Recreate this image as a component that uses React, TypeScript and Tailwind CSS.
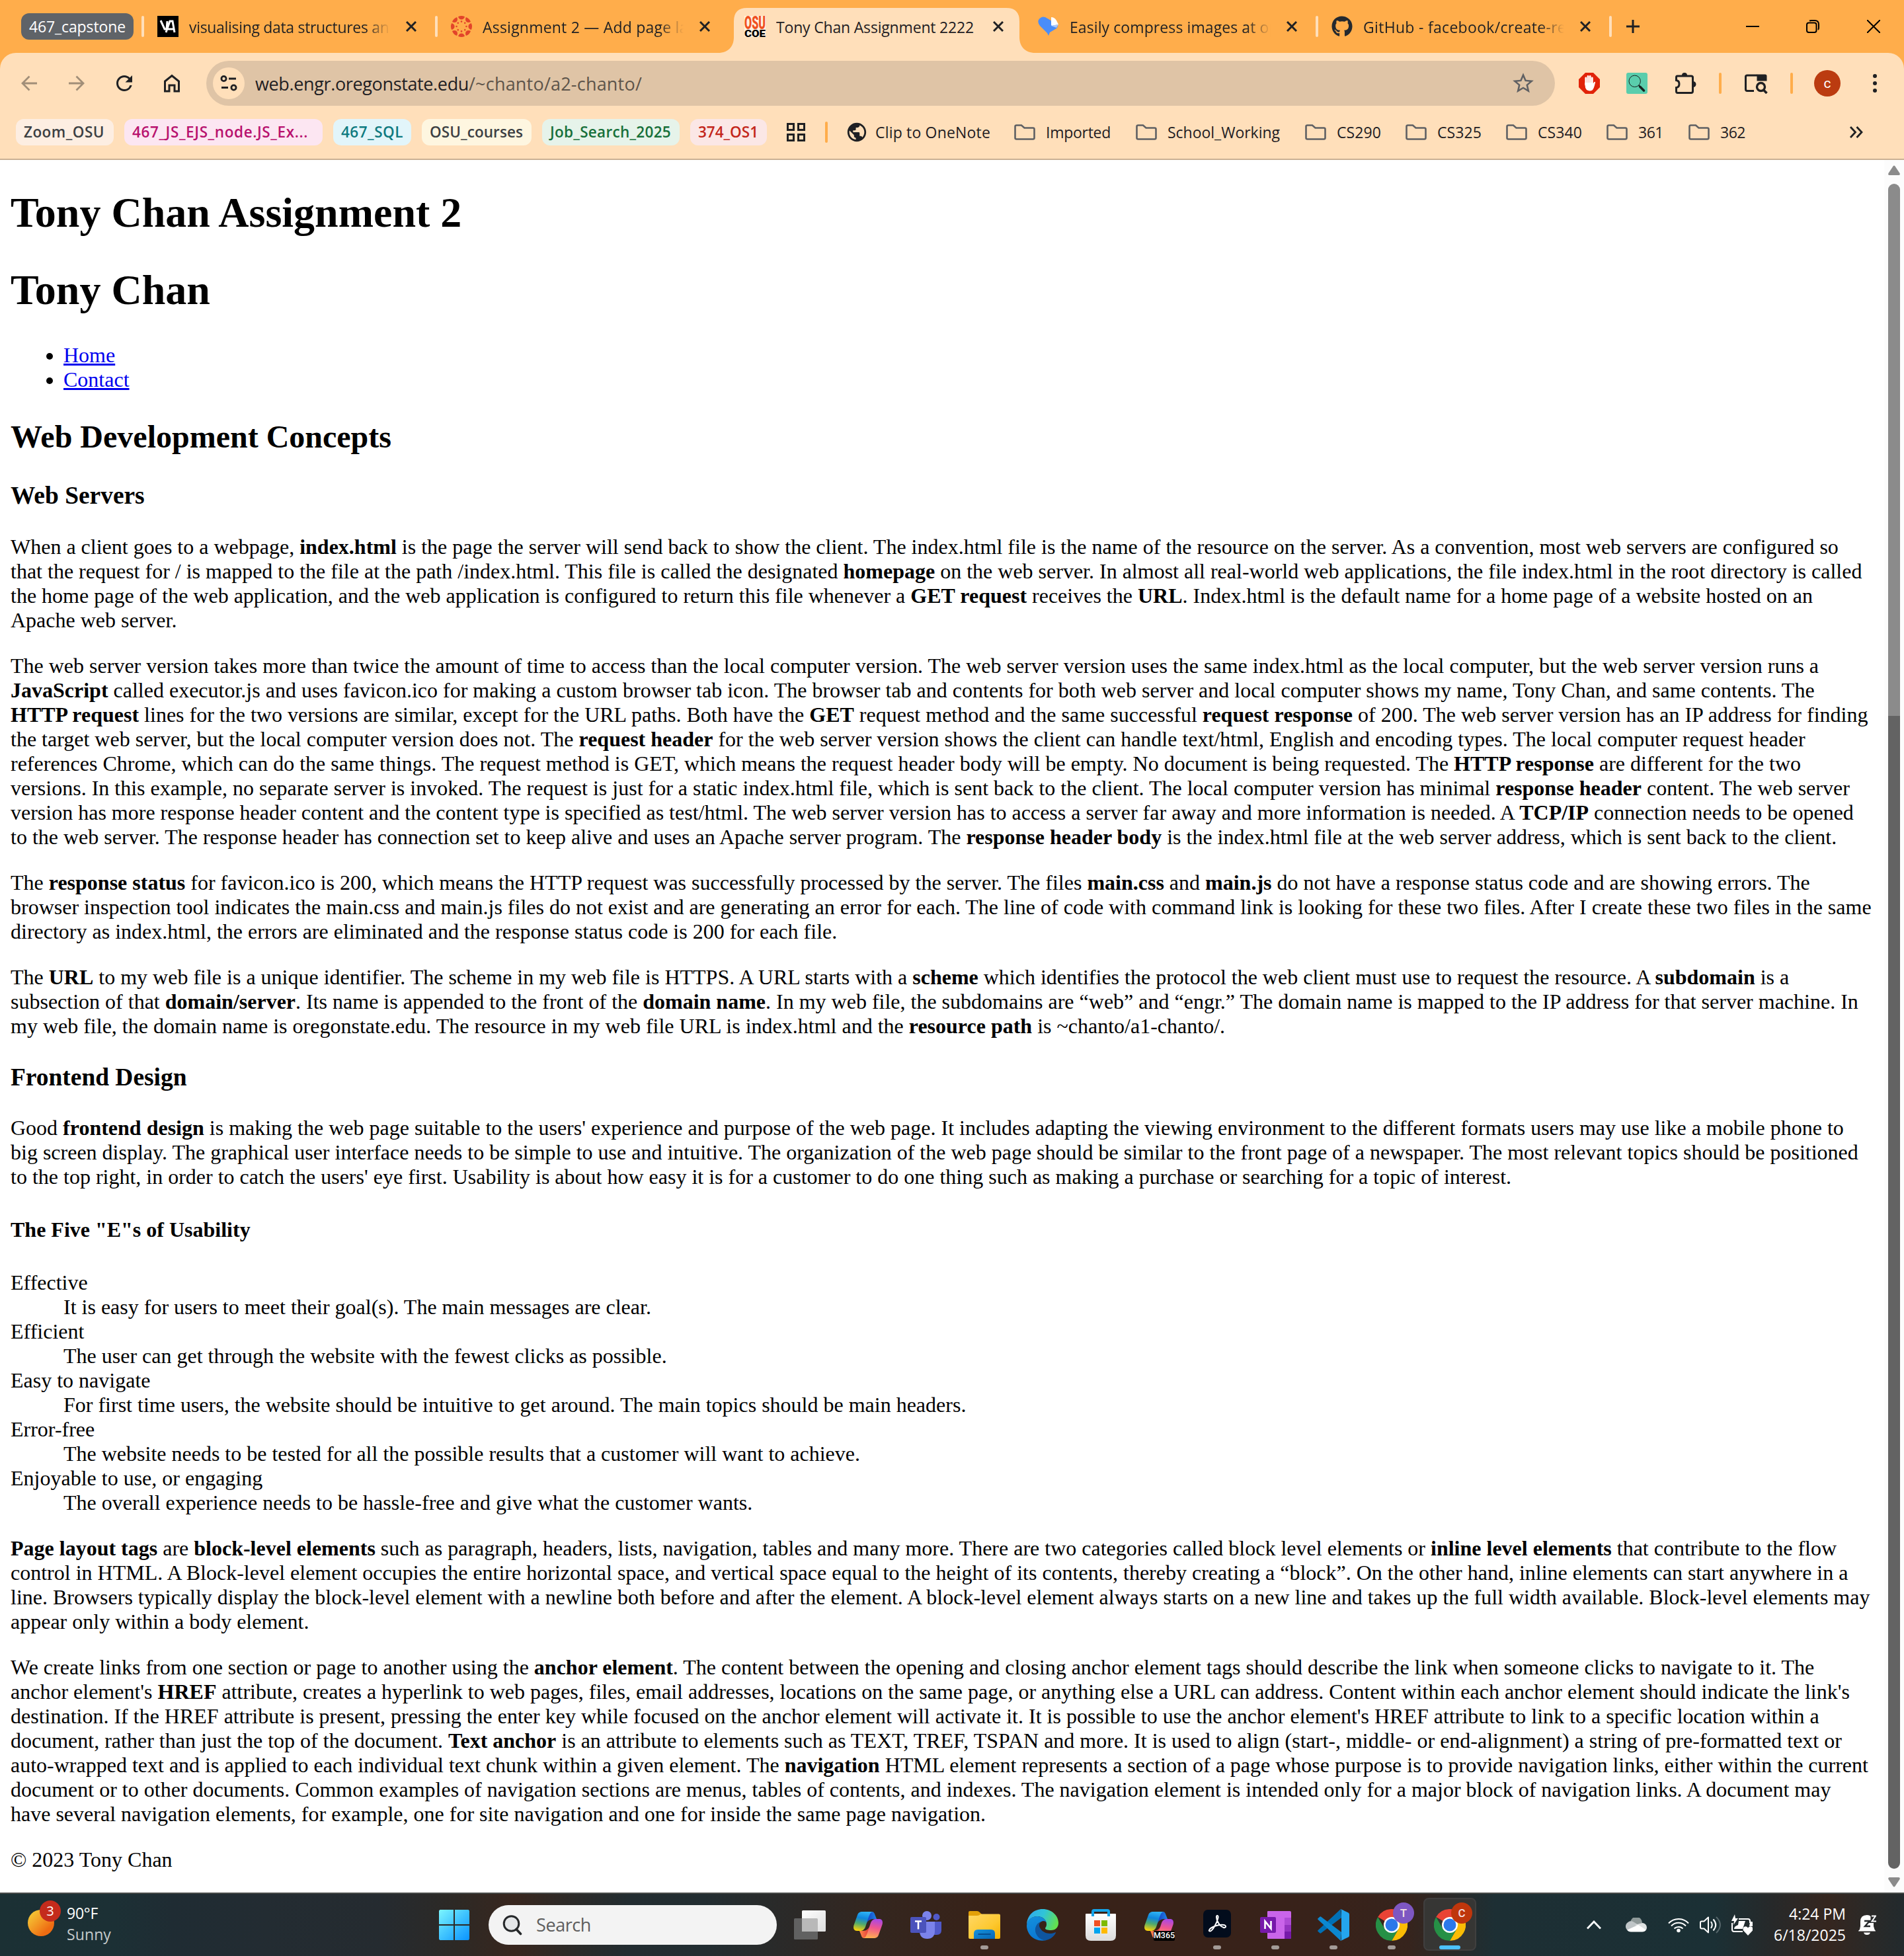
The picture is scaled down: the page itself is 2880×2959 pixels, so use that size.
import React, { useLayoutEffect, useRef } from "react";
import { MdRefresh, MdStarBorder, MdPublic } from "react-icons/md";
import { FaGithub } from "react-icons/fa";

/* Text whose tracking is adjusted so that it occupies exactly `w` pixels. */
function Fit({ w, className = "", children }: { w: number; className?: string; children: React.ReactNode }) {
  const ref = useRef<HTMLSpanElement>(null);
  useLayoutEffect(() => {
    const el = ref.current;
    if (!el) return;
    el.style.letterSpacing = "0px";
    const n = (el.textContent || "").length;
    const natural = el.getBoundingClientRect().width;
    el.style.letterSpacing = `${(w - natural) / n}px`;
  }, [w]);
  return (
    <span ref={ref} className={`inline-block whitespace-pre ${className}`}>
      {children}
    </span>
  );
}

const ink = "#1f2023";

function CloseX({ size = 16, sw = 3 }: { size?: number; sw?: number }) {
  return (
    <svg width={size} height={size} viewBox="0 0 16 16" fill="none" stroke={ink} strokeWidth={sw}>
      <path d="M1 1 15 15M15 1 1 15" />
    </svg>
  );
}

function VaIcon() {
  return (
    <svg width="32" height="32" viewBox="0 0 32 32">
      <rect width="32" height="32" fill="#000" />
      <path d="M5 7 11 20H14L15 8M13 25 19 8H23L26 25M16 20H26" fill="none" stroke="#fff" strokeWidth="3" />
    </svg>
  );
}

function CanvasIcon() {
  const a = [0, 45, 90, 135, 180, 225, 270, 315];
  return (
    <svg width="32" height="32" viewBox="0 0 32 32" fill="#e2432a">
      {a.map((d) => (
        <g key={d} transform={`rotate(${d} 16 16)`}>
          <path d="M11 1.2Q16-1.2 21 1.2Q19.5 5.6 16 5.6Q12.500 5.600 11 1.200Z" />
          <circle cx="16" cy="8.600" r="1.300" />
        </g>
      ))}
    </svg>
  );
}

function OsuIcon() {
  return (
    <svg width="32" height="32" viewBox="0 0 32 32" fontFamily="Roboto, sans-serif" fontWeight="900">
      <rect width="32" height="32" fill="#fff" fillOpacity=".55" />
      <g transform="scale(1 1.45)">
        <text x="0" y="13.600" fontSize="18.500" textLength="32" lengthAdjust="spacingAndGlyphs" fill="#f0501e">OSU</text>
      </g>
      <text x="0" y="31.600" fontSize="15.500" textLength="32" lengthAdjust="spacingAndGlyphs" fill="#000">COE</text>
    </svg>
  );
}

function HeartIcon() {
  return (
    <svg width="32" height="32" viewBox="0 0 32 32">
      <path d="M16 30 14 26 3 15Q-1 10 1 6Q5 0 11 2L18 6 30 15Q30 17 28 19L18 25Z" fill="#4a8df8" />
      <path d="M20 14V2Q25 2 28 7L31 13 21 15Z" fill="#fff" />
      <path d="M20 15 31 13 28 18Z" fill="#a9c8fb" />
    </svg>
  );
}

function Tab({ icon, title, w, active, sep }: { icon: React.ReactNode; title: string; w: number; active?: boolean; sep?: boolean }) {
  return (
    <div className="relative flex h-20 w-[444px] shrink-0 items-center">
      {active && (
        <svg className="absolute top-0 left-[-16px]" width="480" height="80" viewBox="0 0 480 80">
          <path d="M0 80C16 80 24 70 24 56V32Q24 12 44 12H436Q456 12 456 32V56C456 70 464 80 480 80Z" fill="#ffdfba" />
        </svg>
      )}
      <div className={`h-8 w-1 rounded-full ${sep ? "bg-[#ffdfba]" : ""}`} />
      <div className="relative ml-5 h-8 w-8">{icon}</div>
      <div
        className={`relative ml-4 w-[304px] overflow-hidden pt-[2px] text-[23px] leading-8 text-[#1f2023] ${
          active ? "" : "[mask-image:linear-gradient(to_right,black_88%,transparent)]"
        }`}
      >
        <Fit w={w}>{title}</Fit>
      </div>
      <div className="relative ml-6 flex">
        <CloseX />
      </div>
    </div>
  );
}

function TabStrip() {
  return (
    <div className="flex h-20 items-center">
      <div className="ml-8 flex h-10 w-[170px] items-center justify-center rounded-xl bg-[#5f6368] text-[23px] text-white">
        <Fit w={146}>467_capstone</Fit>
      </div>
      <div className="ml-3 flex">
        <Tab sep icon={<VaIcon />} title="visualising data structures and alg" w={352} />
        <Tab sep icon={<CanvasIcon />} title="Assignment 2 — Add page layout" w={359} />
        <Tab active icon={<OsuIcon />} title="Tony Chan Assignment 2222" w={299} />
        <Tab icon={<HeartIcon />} title="Easily compress images at optimal" w={370} />
        <Tab sep icon={<FaGithub size={32} color="#24292f" />} title="GitHub - facebook/create-react" w={340} />
      </div>
      <div className="h-8 w-1 rounded-full bg-[#ffdfba]" />
      <svg className="ml-[22px]" width="20" height="20" viewBox="0 0 20 20" stroke={ink} strokeWidth="3">
        <path d="M10 0V20M0 10H20" />
      </svg>
      <svg className="ml-[161px]" width="20" height="20" viewBox="0 0 20 20" stroke="#000" strokeWidth="2">
        <path d="M0 10H20" />
      </svg>
      <svg className="ml-[71px]" width="20" height="20" viewBox="0 0 20 20" fill="none" stroke="#000" strokeWidth="2">
        <rect x="1" y="4.500" width="14.500" height="14.500" rx="3" />
        <path d="M5 1.500Q6 1 8 1H13Q19 1 19 7V12Q19 14 18 15" />
      </svg>
      <svg className="ml-[72px]" width="20" height="20" viewBox="0 0 20 20" stroke="#000" strokeWidth="2">
        <path d="M0 0 20 20M20 0 0 20" />
      </svg>
    </div>
  );
}

function Arrow({ flip }: { flip?: boolean }) {
  return (
    <svg className={flip ? "ml-12 rotate-180" : "ml-8"} width="24" height="24" viewBox="0 0 24 24" fill="none" stroke="#a18e78" strokeWidth="2.800">
      <path d="M12.500 1.500 2 12 12.500 22.500M2 12H24" />
    </svg>
  );
}

function Toolbar() {
  return (
    <div className="flex h-[92px] items-center">
      <Arrow />
      <Arrow flip />
      <MdRefresh className="ml-[42px]" size={36} color={ink} />
      <svg className="ml-[41px]" width="26" height="28" viewBox="0 0 26 28" fill="none" stroke={ink} strokeWidth="3">
        <path d="M2.500 11 13 2.500 23.500 11V26H17V17H9V26H2.500Z" />
      </svg>
      <div className="ml-[39px] flex h-[68px] w-[2040px] items-center rounded-full bg-[#dfc4a6]">
        <div className="ml-[10px] flex h-12 w-12 items-center justify-center rounded-full bg-[#ffdfba]">
          <svg width="26" height="24" viewBox="0 0 26 24" fill="none" stroke={ink} strokeWidth="2.800">
            <circle cx="5.500" cy="5" r="3.600" />
            <path d="M13 5H24M2 18.500H12" />
            <circle cx="20.500" cy="18.500" r="3.600" />
          </svg>
        </div>
        <div className="ml-4 pt-px text-[27px] leading-9 text-[#1f2023]">
          <Fit w={323}>web.engr.oregonstate.edu</Fit>
          <Fit w={262} className="text-[#5d544a]">/~chanto/a2-chanto/</Fit>
        </div>
        <MdStarBorder className="ml-auto mr-[29px]" size={38} color="#5f6063" />
      </div>
      <svg className="ml-9" width="32" height="32" viewBox="0 0 32 32">
        <path d="M10 0H22L32 10V22L22 32H10L0 22V10Z" fill="#e1230a" />
        <g stroke="#fff" strokeWidth="2.800" strokeLinecap="round">
          <path d="M10.800 18V8M14 16V5.500M17.200 16V5.500M20.300 17V8" />
        </g>
        <path d="M9.400 15H21.700V17Q23 13 24.800 13.800Q25.500 14.200 24.600 16.500Q23 24 20.500 26.500Q16 28.500 12 26Q9.400 23 9.400 18Z" fill="#fff" />
      </svg>
      <svg className="ml-10" width="32" height="32" viewBox="0 0 32 32" fill="none" stroke="#16201d">
        <rect width="32" height="32" rx="3" fill="#5acdac" stroke="none" />
        <circle cx="12.700" cy="12.800" r="8.700" strokeWidth="1" />
        <path d="M18.800 19 21 21.500" strokeWidth="2" />
        <path d="M21 21.500 26.500 27" strokeWidth="3.600" strokeLinecap="round" />
      </svg>
      <svg className="ml-[41px]" width="34" height="36" viewBox="0 0 34 36">
        <path d="M4 7H25Q27.500 7 27.500 9V30Q27.500 32.500 25 32.500H4.500Q2.500 32.500 2.500 30V24.500Q7 24 7 19Q7 14 2.500 13.500V9Q2.500 7 4 7Z" fill="none" stroke={ink} strokeWidth="3" />
        <path d="M11 6a4 4 0 0 1 8 0zM28 15a4.500 4.500 0 0 1 0 9z" fill={ink} />
      </svg>
      <div className="ml-[33px] h-8 w-1 rounded-full bg-[#ffad4b]" />
      <svg className="ml-[34px]" width="36" height="32" viewBox="0 0 36 32" fill="none" stroke={ink} strokeWidth="3">
        <path d="M15 27.500H5Q2.500 27.500 2.500 25V6Q2.500 4 5 4H20" />
        <path d="M19.500 2.500H32Q34.500 2.500 34.500 5V12.500H19.500Z" fill={ink} stroke="none" />
        <circle cx="25.500" cy="21.500" r="6" strokeWidth="3.400" />
        <path d="M29.500 26 34.500 31" strokeWidth="3.600" />
      </svg>
      <div className="ml-[34px] h-8 w-1 rounded-full bg-[#ffad4b]" />
      <div className="ml-8 flex h-10 w-10 items-center justify-center rounded-full bg-[#bb3b10] font-['Roboto'] text-[21px] leading-none text-white">
        c
      </div>
      <svg className="ml-[49px]" width="6" height="28" viewBox="0 0 6 28" fill={ink}>
        <circle cx="3" cy="3" r="3" />
        <circle cx="3" cy="14" r="3" />
        <circle cx="3" cy="25" r="3" />
      </svg>
    </div>
  );
}

function Chip({ w, t, className, children }: { w: string; t: number; className: string; children: string }) {
  return (
    <div className={`mr-4 flex h-10 shrink-0 items-center rounded-xl pl-3 text-[22.500px] font-semibold ${w} ${className}`}>
      <Fit w={t}>{children}</Fit>
    </div>
  );
}

function Folder({ w, t, children }: { w: string; t: number; children: string }) {
  return (
    <div className={`flex shrink-0 items-center ${w}`}>
      <svg width="32" height="24" viewBox="0 0 32 24" fill="none" stroke="#5f6063" strokeWidth="2.600">
        <path d="M3.500 1.500H11L15.500 5.500H28.500Q30.500 5.500 30.500 7.500V20.500Q30.500 22.500 28.500 22.500H3.500Q1.500 22.500 1.500 20.500V3.500Q1.500 1.500 3.500 1.500Z" />
      </svg>
      <span className="ml-4">
        <Fit w={t}>{children}</Fit>
      </span>
    </div>
  );
}

function Bookmarks() {
  return (
    <div className="flex h-[56px] items-center pl-6 text-[23px] leading-8 text-[#1f2023]">
      <Chip w="w-[148px]" t={122} className="bg-[#fdeee2] text-[#3c4043]">Zoom_OSU</Chip>
      <Chip w="w-[300px]" t={266} className="bg-[#fce6f2] text-[#b8116e]">467_JS_EJS_node.JS_Ex...</Chip>
      <Chip w="w-[118px]" t={94} className="bg-[#e2f5fa] text-[#0e7a80]">467_SQL</Chip>
      <Chip w="w-[166px]" t={141} className="bg-[#fef6e0] text-[#3c4043]">OSU_courses</Chip>
      <Chip w="w-[208px]" t={183} className="bg-[#e6f3ea] text-[#17703a]">Job_Search_2025</Chip>
      <Chip w="w-[116px]" t={91} className="bg-[#fbe7e6] text-[#c3261b]">374_OS1</Chip>
      <svg className="ml-[14px] shrink-0" width="28" height="28" viewBox="0 0 28 28" fill="none" stroke={ink} strokeWidth="3">
        <path d="M1.500 1.500H10.500V10.500H1.500ZM17.500 1.500H26.500V10.500H17.500ZM1.500 17.500H10.500V26.500H1.500ZM17.500 17.500H26.500V26.500H17.500Z" />
      </svg>
      <div className="ml-[30px] h-8 w-1 shrink-0 rounded-full bg-[#ffad4b]" />
      <div className="ml-[27px] flex w-[255px] shrink-0 items-center">
        <MdPublic className="shrink-0" size={34} color={ink} />
        <span className="ml-[11px]">
          <Fit w={174}>Clip to OneNote</Fit>
        </span>
      </div>
      <Folder w="w-[184px]" t={98}>Imported</Folder>
      <Folder w="w-[256px]" t={170}>School_Working</Folder>
      <Folder w="w-[152px]" t={67}>CS290</Folder>
      <Folder w="w-[152px]" t={67}>CS325</Folder>
      <Folder w="w-[152px]" t={67}>CS340</Folder>
      <Folder w="w-[124px]" t={38}>361</Folder>
      <Folder w="w-[124px]" t={38}>362</Folder>
      <svg className="ml-[120px] shrink-0" width="20" height="18" viewBox="0 0 20 18" fill="none" stroke={ink} strokeWidth="2.800">
        <path d="M1 1 8.500 9 1 17M10.500 1 18 9 10.500 17" />
      </svg>
    </div>
  );
}

const H1 = "my-[0.67em] text-[64px] font-bold";
const H3 = "my-[1em] text-[37.440px] font-bold";
const P = "my-8";

const usability: [string, string][] = [
  ["Effective", "It is easy for users to meet their goal(s). The main messages are clear."],
  ["Efficient", "The user can get through the website with the fewest clicks as possible."],
  ["Easy to navigate", "For first time users, the website should be intuitive to get around. The main topics should be main headers."],
  ["Error-free", "The website needs to be tested for all the possible results that a customer will want to achieve."],
  ["Enjoyable to use, or engaging", "The overall experience needs to be hassle-free and give what the customer wants."],
];

function Article() {
  return (
    <main className="h-full w-[2850px] overflow-hidden bg-white px-4 font-['Liberation_Serif',serif] text-[32px] leading-[normal] text-black [&_b]:font-bold">
      <h1 className={H1}>Tony Chan Assignment 2</h1>
      <h1 className={H1}>Tony Chan</h1>
      <ul className="my-8 list-disc pl-20 text-black">
        <li><a href="#" className="text-[#0000ee] underline">Home</a></li>
        <li><a href="#" className="text-[#0000ee] underline">Contact</a></li>
      </ul>
      <h2 className="mt-[40.700px] mb-[0.83em] text-[48px] font-bold">Web Development Concepts</h2>
      <h3 className={H3}>Web Servers</h3>
      <p className={P}>
        When a client goes to a webpage, <b>index.html</b> is the page the server will send back to show the client. The index.html file is the name of the resource on the server. As a convention, most web servers are configured so that the request for / is mapped to the file at the path /index.html. This file is called the designated <b>homepage</b> on the web server. In almost all real-world web applications, the file index.html in the root directory is called the home page of the web application, and the web application is configured to return this file whenever a <b>GET request</b> receives the <b>URL</b>. Index.html is the default name for a home page of a website hosted on an Apache web server.
      </p>
      <p className={P}>
        The web server version takes more than twice the amount of time to access than the local computer version. The web server version uses the same index.html as the local computer, but the web server version runs a <b>JavaScript</b> called executor.js and uses favicon.ico for making a custom browser tab icon. The browser tab and contents for both web server and local computer shows my name, Tony Chan, and same contents. The <b>HTTP request</b> lines for the two versions are similar, except for the URL paths. Both have the <b>GET</b> request method and the same successful <b>request response</b> of 200. The web server version has an IP address for finding the target web server, but the local computer version does not. The <b>request header</b> for the web server version shows the client can handle text/html, English and encoding types. The local computer request header references Chrome, which can do the same things. The request method is GET, which means the request header body will be empty. No document is being requested. The <b>HTTP response</b> are different for the two versions. In this example, no separate server is invoked. The request is just for a static index.html file, which is sent back to the client. The local computer version has minimal <b>response header</b> content. The web server version has more response header content and the content type is specified as test/html. The web server version has to access a server far away and more information is needed. A <b>TCP/IP</b> connection needs to be opened to the web server. The response header has connection set to keep alive and uses an Apache server program. The <b>response header body</b> is the index.html file at the web server address, which is sent back to the client.
      </p>
      <p className={P}>
        The <b>response status</b> for favicon.ico is 200, which means the HTTP request was successfully processed by the server. The files <b>main.css</b> and <b>main.js</b> do not have a response status code and are showing errors. The browser inspection tool indicates the main.css and main.js files do not exist and are generating an error for each. The line of code with command link is looking for these two files. After I create these two files in the same directory as index.html, the errors are eliminated and the response status code is 200 for each file.
      </p>
      <p className={P}>
        The <b>URL</b> to my web file is a unique identifier. The scheme in my web file is HTTPS. A URL starts with a <b>scheme</b> which identifies the protocol the web client must use to request the resource. A <b>subdomain</b> is a subsection of that <b>domain/server</b>. Its name is appended to the front of the <b>domain name</b>. In my web file, the subdomains are “web” and “engr.” The domain name is mapped to the IP address for that server machine. In my web file, the domain name is oregonstate.edu. The resource in my web file URL is index.html and the <b>resource path</b> is ~chanto/a1-chanto/.
      </p>
      <h3 className={H3}>Frontend Design</h3>
      <p className={P}>
        Good <b>frontend design</b> is making the web page suitable to the users' experience and purpose of the web page. It includes adapting the viewing environment to the different formats users may use like a mobile phone to big screen display. The graphical user interface needs to be simple to use and intuitive. The organization of the web page should be similar to the front page of a newspaper. The most relevant topics should be positioned to the top right, in order to catch the users' eye first. Usability is about how easy it is for a customer to do one thing such as making a purchase or searching for a topic of interest.
      </p>
      <h4 className="my-[1.33em] font-bold">The Five "E"s of Usability</h4>
      <dl className="my-8">
        {usability.map(([term, text]) => (
          <React.Fragment key={term}>
            <dt>{term}</dt>
            <dd className="ml-20">{text}</dd>
          </React.Fragment>
        ))}
      </dl>
      <p className={P}>
        <b>Page layout tags</b> are <b>block-level elements</b> such as paragraph, headers, lists, navigation, tables and many more. There are two categories called block level elements or <b>inline level elements</b> that contribute to the flow control in HTML. A Block-level element occupies the entire horizontal space, and vertical space equal to the height of its contents, thereby creating a “block”. On the other hand, inline elements can start anywhere in a line. Browsers typically display the block-level element with a newline both before and after the element. A block-level element always starts on a new line and takes up the full width available. Block-level elements may appear only within a body element.
      </p>
      <p className={P}>
        We create links from one section or page to another using the <b>anchor element</b>. The content between the opening and closing anchor element tags should describe the link when someone clicks to navigate to it. The anchor element's <b>HREF</b> attribute, creates a hyperlink to web pages, files, email addresses, locations on the same page, or anything else a URL can address. Content within each anchor element should indicate the link's destination. If the HREF attribute is present, pressing the enter key while focused on the anchor element will activate it. It is possible to use the anchor element's HREF attribute to link to a specific location within a document, rather than just the top of the document. <b>Text anchor</b> is an attribute to elements such as TEXT, TREF, TSPAN and more. It is used to align (start-, middle- or end-alignment) a string of pre-formatted text or auto-wrapped text and is applied to each individual text chunk within a given element. The <b>navigation</b> HTML element represents a section of a page whose purpose is to provide navigation links, either within the current document or to other documents. Common examples of navigation sections are menus, tables of contents, and indexes. The navigation element is intended only for a major block of navigation links. A document may have several navigation elements, for example, one for site navigation and one for inside the same page navigation.
      </p>
      <p className={P}>© 2023 Tony Chan</p>
    </main>
  );
}

function Scrollbar() {
  return (
    <div className="flex w-[30px] flex-col items-center bg-[#fcfcfc] pt-2">
      <svg width="18" height="16" viewBox="0 0 18 16" fill="#8b8b8b">
        <path d="M7.500 1.500Q9-.5 10.500 1.500L17.500 12Q18.500 15 16 15H2Q-.5 15 .5 12Z" />
      </svg>
      <div className="mt-[12px] h-[805px] w-[18px] rounded-t-full bg-[#8b8b8b]" />
      <div className="h-[1744px] w-[18px] rounded-b-full bg-[#636363]" />
      <svg className="mt-[12px] rotate-180" width="18" height="16" viewBox="0 0 18 16" fill="#8b8b8b">
        <path d="M7.500 1.500Q9-.5 10.500 1.500L17.500 12Q18.500 15 16 15H2Q-.5 15 .5 12Z" />
      </svg>
    </div>
  );
}

/* ---------- taskbar icons ---------- */

function Copilot({ id }: { id: string }) {
  return (
    <svg width="44" height="40" viewBox="0 0 44 40">
      <defs>
        <linearGradient id={id + "a"} x1=".6" y1="0" x2=".4" y2="1">
          <stop offset="0" stopColor="#2fb4f5" />
          <stop offset=".35" stopColor="#0f86dc" />
          <stop offset=".65" stopColor="#4faa6e" />
          <stop offset="1" stopColor="#f5cf0c" />
        </linearGradient>
        <linearGradient id={id + "b"} x1=".6" y1="0" x2=".4" y2="1">
          <stop offset="0" stopColor="#a948e6" />
          <stop offset=".45" stopColor="#f0568e" />
          <stop offset="1" stopColor="#ffb04f" />
        </linearGradient>
        <linearGradient id={id + "c"} x1="0" x2="1">
          <stop offset="0" stopColor="#1a3bc4" />
          <stop offset="1" stopColor="#1b86e6" />
        </linearGradient>
        <linearGradient id={id + "d"} x1="0" x2="1">
          <stop offset="0" stopColor="#ff8a4a" />
          <stop offset="1" stopColor="#e23a3a" />
        </linearGradient>
      </defs>
      <path d="M22 0H28C31 0 32 3 33 6L35 11H32C26 11 23 12 20 17Z" fill={`url(#${id}c)`} />
      <path d="M22 40H16C13 40 12 37 11 34L9 29H12C18 29 21 28 24 23Z" fill={`url(#${id}d)`} />
      <path d="M14 0H30C26 0 25 3 23 8L18 23C16 28 13 29 10 29H5C0 29-1 24 1 19L6 5C7 2 9 0 14 0Z" fill={`url(#${id}a)`} />
      <path d="M34 11H39C44 11 45 16 43 21L38 35C37 38 35 40 30 40H14C18 40 19 37 21 32L26 17C28 12 31 11 34 11Z" fill={`url(#${id}b)`} />
    </svg>
  );
}

function TaskView() {
  return (
    <svg width="48" height="44" viewBox="0 0 48 44">
      <defs>
        <linearGradient id="tv" x1="0" y1="0" x2="1" y2="1">
          <stop offset="0" stopColor="#fff" />
          <stop offset="1" stopColor="#dedede" />
        </linearGradient>
      </defs>
      <rect x="0" y="12" width="36" height="32" rx="1.500" fill="#616161" />
      <rect x="12" y="0" width="36" height="32" rx="1.500" fill="url(#tv)" />
      <path d="M12 12H34.500Q36 12 36 13.500V32H12Z" fill="#b9b9b9" />
    </svg>
  );
}

function Teams() {
  return (
    <svg width="48" height="44" viewBox="0 0 48 44">
      <circle cx="39.500" cy="10" r="5" fill="#5059c9" />
      <path d="M34 17H47V30Q47 37 40 37H34Z" fill="#5059c9" />
      <circle cx="25" cy="8" r="7" fill="#7b83eb" />
      <path d="M14 17H37V31Q37 43 25.500 43Q14 43 14 31Z" fill="#7b83eb" />
      <rect x="0" y="10" width="24" height="24" rx="2" fill="#4b53bc" />
      <path d="M7 16.500H17M12 16.500V28.500" stroke="#fff" strokeWidth="2.600" />
    </svg>
  );
}

function Explorer() {
  return (
    <svg width="48" height="42" viewBox="0 0 48 42">
      <defs>
        <linearGradient id="fe" x1="0" y1="0" x2="1" y2="1">
          <stop offset="0" stopColor="#ffd866" />
          <stop offset=".6" stopColor="#fdc830" />
          <stop offset="1" stopColor="#f5b000" />
        </linearGradient>
        <linearGradient id="fb" x1="0" y1="0" x2="1" y2="1">
          <stop offset="0" stopColor="#1593dc" />
          <stop offset="1" stopColor="#0765b5" />
        </linearGradient>
      </defs>
      <path d="M0 2Q0 0 2 0H13Q15 0 17 2L20 5V12H0Z" fill="#e3a008" />
      <path d="M0 7H13Q16 7 18 5L19 4.500H46Q48 4.500 48 6.500V40Q48 42 46 42H2Q0 42 0 40Z" fill="url(#fe)" />
      <path d="M8 42V34Q8 28 14 28H34Q40 28 40 34V42Z" fill="url(#fb)" />
      <path d="M14.500 35H33.500" stroke="#054f92" strokeWidth="2" />
    </svg>
  );
}

function EdgeIcon() {
  return (
    <svg width="48" height="48" viewBox="0 0 48 48">
      <defs>
        <linearGradient id="eg1" x1="0" y1=".2" x2="1" y2=".5">
          <stop offset="0" stopColor="#2fa8ee" />
          <stop offset=".5" stopColor="#30c4d8" />
          <stop offset="1" stopColor="#63e04e" />
        </linearGradient>
        <linearGradient id="eg2" x1="0" y1="0" x2=".3" y2="1">
          <stop offset="0" stopColor="#1490dc" />
          <stop offset="1" stopColor="#0a78d4" />
        </linearGradient>
      </defs>
      <path d="M0 23C1 9 11 0 24 0C38 0 48 10 48 21C48 29 42 32 37 32C31 32 28 31 28 29C28 28 30 27 30 23C30 16 24 11 16 11C8 11 2 16 0 23Z" fill="url(#eg1)" />
      <path d="M0 25C0 16 8 11 16 11C23 11 28 15 30 20C28 18 25 17 22 19C14 22 12 30 15 37C18 43 24 47 30 47C12 51 0 38 0 25Z" fill="url(#eg2)" />
      <path d="M22 19C14 22 11 30 14 37C18 46 27 49 33 46C38 44 42 40 44 36C44.500 35 43.500 35 42.500 35.500C34 39 25 36 21 30C18 26 18 22 22 19Z" fill="#0f559f" />
    </svg>
  );
}

function Store() {
  return (
    <svg width="46" height="48" viewBox="0 0 46 48">
      <defs>
        <linearGradient id="st" x1="0" y1="0" x2="0" y2="1">
          <stop offset="0" stopColor="#fff" />
          <stop offset="1" stopColor="#dcdcdc" />
        </linearGradient>
      </defs>
      <path d="M0 8Q0 7 1 7H45Q46 7 46 8V40Q46 48 38 48H8Q0 48 0 40Z" fill="url(#st)" />
      <path d="M11 11V4Q11 2 13 2H33Q35 2 35 4V11" fill="none" stroke="#16a4e8" strokeWidth="4" />
      <rect x="13" y="17" width="9" height="9" fill="#f25022" />
      <rect x="24" y="17" width="9" height="9" fill="#7fba00" />
      <rect x="13" y="28" width="9" height="9" fill="#00a4ef" />
      <rect x="24" y="28" width="9" height="9" fill="#ffb900" />
    </svg>
  );
}

function Acrobat() {
  return (
    <svg width="42" height="42" viewBox="0 0 42 42">
      <rect width="42" height="42" rx="7" fill="#020c1c" />
      <path
        d="M9 31C11 26 23 22 31 23C36 24 34 28 31 27C25 25 20 17 20 11C20 8 23 8 22.500 12C21 20 14 32 10.500 32.500C9 32.500 8.500 32 9 31Z"
        fill="none"
        stroke="#fff"
        strokeWidth="2"
      />
    </svg>
  );
}

function OneNote() {
  return (
    <svg width="47" height="42" viewBox="0 0 47 42">
      <path d="M12 0H45Q47 0 47 2V40Q47 42 45 42H12Q11 42 11 41V1Q11 0 12 0Z" fill="#ca64ea" />
      <path d="M37 10H47V21H37Z" fill="#ae4bd5" />
      <path d="M37 21H47V31H37Z" fill="#9332bf" />
      <path d="M37 31H47V40Q47 42 45 42H37Z" fill="#7719aa" />
      <rect y="9" width="24" height="24" rx="2" fill="#7719aa" />
      <path d="M7.500 27V15.500L16.500 26.500V15" fill="none" stroke="#fff" strokeWidth="2.600" />
    </svg>
  );
}

function VsCode() {
  return (
    <svg width="48" height="48" viewBox="0 0 48 48">
      <path d="M35 0 36 13 5 36.500Q4 37 3 36L.7 34Q-.4 33 .7 32Z" fill="#0070b5" />
      <path d="M35 48 36 35 5 11.500Q4 11 3 12L.7 14Q-.4 15 .7 16Z" fill="#0c88d0" />
      <path d="M35 0 46.500 5.500Q48 6.500 48 8V40Q48 41.500 46.500 42.500L35 48Q36 47 36 45V3Q36 1 35 0Z" fill="#24a5ee" />
    </svg>
  );
}

function ChromeIcon() {
  return (
    <svg width="48" height="48" viewBox="0 0 48 48">
      <path d="M24 24 3.200 12A24 24 0 0 1 44.800 12Z" fill="#ea4335" />
      <path d="M24 24V12H44.800A24 24 0 0 1 24 48L34.400 30Z" fill="#fbbc05" />
      <path d="M3.200 12A24 24 0 0 0 24 48L34.400 30H13.600Z" fill="#269046" />
      <circle cx="24" cy="24" r="12" fill="#fff" />
      <circle cx="24" cy="24" r="9.500" fill="#2b78ea" />
    </svg>
  );
}

function Cell({ children, dot, on }: { children: React.ReactNode; dot?: boolean; on?: boolean }) {
  return (
    <div className="relative flex h-full w-[88px] shrink-0 items-center justify-center">
      {on && <div className="absolute top-[6px] left-1 h-20 w-20 rounded-lg border-2 border-[#403f3f] bg-[#363634]" />}
      <div className="relative flex">{children}</div>
      {dot && <div className="absolute top-[78px] left-[38px] h-[6px] w-3 rounded-full bg-[#a39b97]" />}
      {on && <div className="absolute top-[78px] left-7 h-[6px] w-8 rounded-full bg-[#4cc2ff]" />}
    </div>
  );
}

function Badge({ className, children }: { className: string; children: string }) {
  return (
    <div className={`absolute top-[-10px] left-[26px] flex h-8 w-8 items-center justify-center rounded-full font-['Roboto'] text-[17px] leading-none font-medium text-[#f3dfe0] ${className}`}>
      {children}
    </div>
  );
}

function Tray() {
  return (
    <div className="ml-auto flex h-full items-center pr-[42px]">
      <svg width="22" height="14" viewBox="0 0 22 14" fill="none" stroke="#fff" strokeWidth="2.800">
        <path d="M1 12.500 11 2 21 12.500" />
      </svg>
      <svg className="ml-[37px]" width="32" height="22" viewBox="0 0 32 22">
        <path d="M7 7.500A9 9 0 0 1 25 8L14 13Z" fill="#8f9999" />
        <path d="M0 14A8 8 0 0 1 12 6.500L22 12.500 2 18.500Q0 16 0 14Z" fill="#bfc5c7" />
        <path d="M14 11 25 8A7 7 0 0 1 31 18.500Z" fill="#dfe2e2" />
        <path d="M2 18.500 19 11 31 18.500Q29 21.500 25 21.500H8Q4 21.500 2 18.500Z" fill="#fff" />
      </svg>
      <svg className="ml-8" width="32" height="24" viewBox="0 0 32 24" fill="none" stroke="#fff" strokeWidth="2">
        <path d="M1 9.500A20.500 20.500 0 0 1 31 9.500M5 13.500A15 15 0 0 1 27 13.500M9.500 17.500A9.500 9.500 0 0 1 22.500 17.500" />
        <circle cx="16" cy="20.500" r="2.800" fill="#fff" stroke="none" />
      </svg>
      <svg className="ml-4" width="32" height="28" viewBox="0 0 32 28" fill="none" stroke="#fff" strokeWidth="2">
        <path d="M13 2.500V25.500L6.500 19.500H3Q1 19.500 1 17.500V10.500Q1 8.500 3 8.500H6.500Z" strokeLinejoin="round" />
        <path d="M17 9Q20.500 14 17 19M20.500 5.500Q28 14 20.500 22.500" />
        <path d="M25 2Q37 14 25 26" stroke="#56666a" />
      </svg>
      <svg className="ml-4" width="32" height="32" viewBox="0 0 32 32">
        <path d="M11 7H25Q28 7 28 10V12H30.500Q32 12 32 14V17M1 13V23Q1 26 4 26H17" fill="none" stroke="#fff" strokeWidth="2" />
        <path d="M11 10H21L17 22H4Q4 18 10 16ZM28 12H32V18H27Z" fill="#fff" />
        <path d="M5 0 0 10H4L3 16 10 6H6Z" fill="#fff" />
        <path d="M25 32 18 24.500Q16.500 21 19 19Q22.500 17 25 20.500Q27.500 17 31 19Q33.500 21 32 24.500Z" fill="#fff" />
      </svg>
      <div className="mr-px -mt-[3px] ml-8 flex w-[109px] flex-col items-end text-[23px] leading-8 text-white">
        <Fit w={86}>4:24 PM</Fit>
        <Fit w={109}>6/18/2025</Fit>
      </div>
      <svg className="ml-[18px]" width="27" height="30" viewBox="0 0 27 30">
        <path d="M0 24.500Q0 23 2 22L3 17V10Q3 0 13 0Q17 0 18.500 2V8H23V17L24.500 22Q26 23 26 24.500Z" fill="#fff" />
        <path d="M8 26.500H18Q17 30 13 30Q9 30 8 26.500Z" fill="#fff" />
        <path d="M9 9H17L10 17H18" fill="none" stroke="#26292b" strokeWidth="2.400" />
        <path d="M20 1.500H26L20.500 9.500H27" fill="none" stroke="#26292b" strokeWidth="5" />
        <path d="M20 1.500H26L20.500 9.500H27" fill="none" stroke="#fff" strokeWidth="2" />
      </svg>
    </div>
  );
}

function Taskbar() {
  return (
    <div className="flex h-24 items-center border-t-2 border-[#484b49] bg-[linear-gradient(90deg,#1b3034_0%,#1c3035_6%,#1f2c33_9%,#232c32_14%,#252b30_20%,#2d2925_24%,#38261e_27%,#2c2a28_30%,#222c30_33%,#222d31_37%,#2c2927_42%,#34261f_46%,#382218_52%,#38221a_70%,#36241d_74%,#1d2f34_78.500%,#1b3035_90%,#26292a_93%,#35261f_96%,#2b2927_98%,#222a2d_100%)]">
      <div className="relative ml-[42px] h-full w-[59px]">
        <div className="absolute top-[24px] left-0 h-10 w-10 rounded-full bg-linear-to-br from-[#f3c233] from-15% to-[#ee6c12] to-75%" />
        <div className="absolute top-[10px] left-[18px] flex h-8 w-8 items-center justify-center rounded-full bg-[#c42b1c] text-[20px] leading-none text-white">3</div>
      </div>
      <div className="-mt-[4px] flex w-[563px] flex-col text-[23px] leading-8 text-white">
        <span><Fit w={47}>90°F</Fit></span>
        <span className="text-[#c5cbcc]"><Fit w={67}>Sunny</Fit></span>
      </div>
      <svg width="46" height="46" viewBox="0 0 46 46">
        <defs>
          <linearGradient id="win" x1="0" y1="0" x2="1" y2="1">
            <stop offset="0" stopColor="#7df6ff" />
            <stop offset=".5" stopColor="#3fc3ff" />
            <stop offset="1" stopColor="#0a93ff" />
          </linearGradient>
        </defs>
        <path d="M1.500 0H22V22H0V1.500ZM24 0H44.500L46 1.500V22H24ZM0 24H22V46H1.500L0 44.500ZM24 24H46V44.500L44.500 46H24Z" fill="url(#win)" />
      </svg>
      <div className="ml-[29px] flex h-[60px] w-[436px] items-center rounded-full bg-[#f3f3f3]">
        <svg className="ml-[21px]" width="30" height="31" viewBox="0 0 30 31" fill="#e4e6e8" stroke="#26282a" strokeWidth="3">
          <circle cx="13.500" cy="13" r="11.300" />
          <path d="M21 21.500 27.500 28.500" strokeWidth="3.600" strokeLinecap="round" />
        </svg>
        <span className="ml-[21px] text-[27px] leading-9 text-[#5d5d5d]">
          <Fit w={83}>Search</Fit>
        </span>
      </div>
      <div className="ml-[6px] flex h-full">
        <Cell><TaskView /></Cell>
        <Cell><Copilot id="c1" /></Cell>
        <Cell><Teams /></Cell>
        <Cell dot><Explorer /></Cell>
        <Cell><EdgeIcon /></Cell>
        <Cell><Store /></Cell>
        <Cell>
          <Copilot id="c2" />
          <div className="absolute top-[29px] left-[14px] flex h-[15px] w-8 items-center justify-center rounded-[2px] bg-black font-['Roboto'] text-[12.500px] leading-none font-medium text-white">
            M365
          </div>
        </Cell>
        <Cell dot><div className="-mt-[4px]"><Acrobat /></div></Cell>
        <Cell dot><OneNote /></Cell>
        <Cell dot><VsCode /></Cell>
        <Cell dot>
          <ChromeIcon />
          <Badge className="bg-[#7e57c2]">T</Badge>
        </Cell>
        <Cell on>
          <ChromeIcon />
          <Badge className="bg-[#bf360c]">C</Badge>
        </Cell>
      </div>
      <Tray />
    </div>
  );
}

export default function App() {
  return (
    <div className="flex h-[2959px] w-[2880px] flex-col overflow-hidden bg-white font-['Open_Sans','Noto_Sans',sans-serif]">
      <header className="h-[242px] bg-[#ffad4b]">
        <TabStrip />
        <div className="h-[162px] rounded-t-[24px] border-b-2 border-[#c9b094] bg-[#ffdfba]">
          <Toolbar />
          <Bookmarks />
        </div>
      </header>
      <div className="flex h-[2621px]">
        <Article />
        <Scrollbar />
      </div>
      <Taskbar />
    </div>
  );
}
